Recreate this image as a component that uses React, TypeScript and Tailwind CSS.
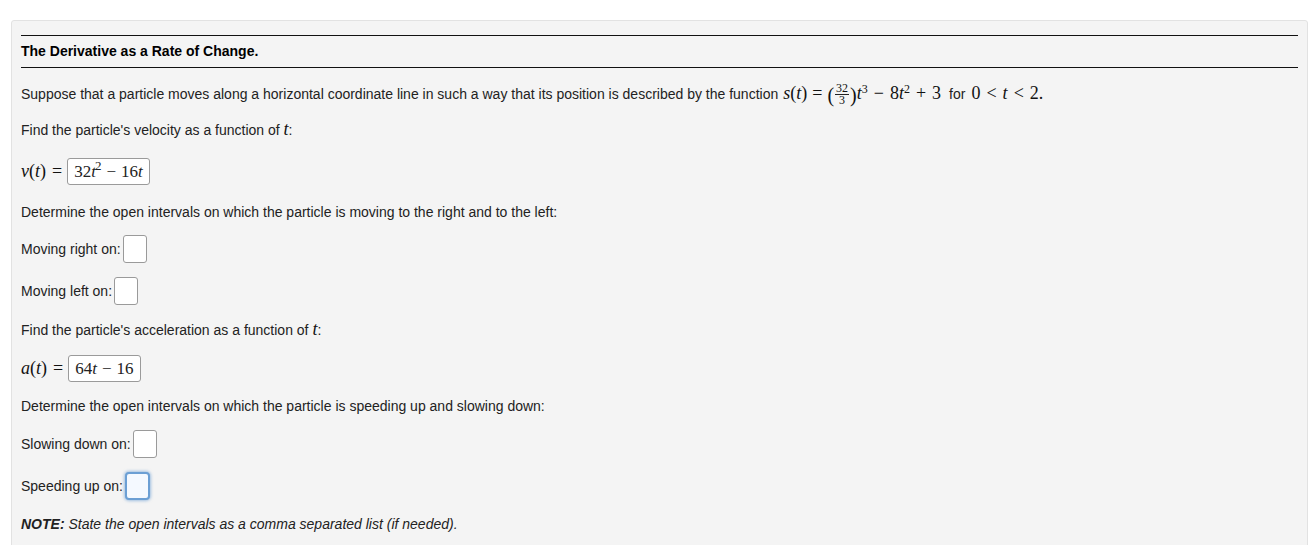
import type { ReactNode } from 'react';

const serif = "font-['Liberation_Serif','Times_New_Roman',serif]";

const V = ({ children }: { children: ReactNode }) => (
  <span className={`${serif} italic`}>{children}</span>
);

const M = ({ children }: { children: ReactNode }) => (
  <span className={`${serif} text-[18px] leading-none text-[#111]`}>{children}</span>
);

const EmptyBox = ({ focused = false }: { focused?: boolean }) =>
  focused ? (
    <span className="ml-[2px] inline-block h-[28px] w-[25px] rounded-[4px] border-2 border-[#6b9fd4] bg-[#f4f9ff] shadow-[0_0_3px_1px_rgba(107,159,212,0.6)]" />
  ) : (
    <span className="ml-[2px] inline-block h-[28px] w-[24px] rounded-[3px] border border-[#9a9a9a] bg-white" />
  );

const AnswerBox = ({ children }: { children: ReactNode }) => (
  <span className={`ml-[5px] inline-flex h-[27px] items-center rounded-[3px] border border-[#9a9a9a] bg-white px-[6px] pt-[2px] ${serif} text-[17px] text-[#222]`}>
    {children}
  </span>
);

export default function App() {
  return (
    <div className="min-h-[545px] bg-white pt-[20px] pl-[11px] pr-[6px] font-['Liberation_Sans',Arial,sans-serif] text-[14px] text-[#222]">
      <div className="h-[540px] rounded-[3px] border border-[#e2e2e2] bg-[#f4f4f4] px-[9px] pt-[14px]">
        <div className="h-[1px] bg-[#111]" />
        <div className="flex h-[31px] items-center text-[14px] font-bold text-black">
          The Derivative as a Rate of Change.
        </div>
        <div className="h-[1px] bg-[#111]" />

        <p className="mt-[12px] h-[20px] whitespace-nowrap leading-[20px]">
          Suppose that a particle moves along a horizontal coordinate line in such a way that its position is described by the function
          <M>
            <span className="ml-[5px]">
              <V>s</V>(<V>t</V>)<span className="mx-[5px]">=</span>
            </span>
            <span className="relative top-[3px] inline-flex items-center leading-none">
              <span className="text-[20px]">(</span>
              <span className="mx-[1px] inline-flex flex-col items-center text-[12px] leading-[11px]">
                <span className="border-b border-[#222] px-[1px]">32</span>
                <span>3</span>
              </span>
              <span className="text-[20px]">)</span>
            </span>
            <V>t</V>
            <sup className="text-[12px] leading-none">3</sup>
            <span className="mx-[6px]">−</span>8<V>t</V>
            <sup className="text-[12px] leading-none">2</sup>
            <span className="mx-[6px]">+</span>3
          </M>
          <span className="ml-[8px] mr-[6px]">for</span>
          <M>
            0<span className="mx-[6px]">&lt;</span><V>t</V><span className="mx-[6px]">&lt;</span>2.
          </M>
        </p>

        <p className="mt-[20px] h-[20px] leading-[20px]">
          Find the particle's velocity as a function of{' '}
          <M>
            <V>t</V>
          </M>
          :
        </p>

        <div className="mt-[17px] flex h-[28px] items-center">
          <M>
            <V>v</V>(<V>t</V>)<span className="ml-[6px]">=</span>
          </M>
          <AnswerBox>
            32<V>t</V>
            <sup className="-ml-[1px] text-[13px] leading-none">2</sup>
            <span className="mx-[5px]">−</span>16<V>t</V>
          </AnswerBox>
        </div>

        <p className="mt-[17px] h-[20px] leading-[20px]">
          Determine the open intervals on which the particle is moving to the right and to the left:
        </p>

        <div className="mt-[13px] flex h-[28px] items-center">
          Moving right on: <EmptyBox />
        </div>

        <div className="mt-[14px] flex h-[28px] items-center">
          Moving left on: <EmptyBox />
        </div>

        <p className="mt-[15px] h-[20px] leading-[20px]">
          Find the particle's acceleration as a function of{' '}
          <M>
            <V>t</V>
          </M>
          :
        </p>

        <div className="mt-[14px] flex h-[28px] items-center">
          <M>
            <V>a</V>(<V>t</V>)<span className="ml-[6px]">=</span>
          </M>
          <AnswerBox>
            64<V>t</V>
            <span className="mx-[5px]">−</span>16
          </AnswerBox>
        </div>

        <p className="mt-[14px] h-[20px] leading-[20px]">
          Determine the open intervals on which the particle is speeding up and slowing down:
        </p>

        <div className="mt-[14px] flex h-[28px] items-center">
          Slowing down on: <EmptyBox />
        </div>

        <div className="mt-[14px] flex h-[28px] items-center">
          Speeding up on: <EmptyBox focused />
        </div>

        <p className="mt-[14px] h-[20px] italic leading-[20px]">
          <span className="font-bold">NOTE:</span> State the open intervals as a comma separated list (if needed).
        </p>
      </div>
    </div>
  );
}
